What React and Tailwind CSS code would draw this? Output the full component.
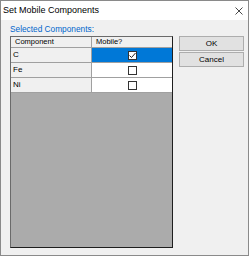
import React from "react";

function Check({ checked }) {
  return (
    <div className="w-[9px] h-[9px] bg-white border border-[#333] flex items-center justify-center">
      {checked && (
        <svg width="7" height="7" viewBox="0 0 7 7">
          <polyline points="0.5,3.5 2.5,5.5 6.5,1" fill="none" stroke="#222" strokeWidth="1" />
        </svg>
      )}
    </div>
  );
}

function Row({ name, checked, selected }) {
  return (
    <div className="flex h-[15px] border-b border-[#a0a0a0]">
      <div className="w-[81px] bg-[#f0f0f0] border-r border-[#a0a0a0] pl-[2px] flex items-center text-[8px] text-black">
        {name}
      </div>
      <div className={"flex-1 flex items-center justify-center " + (selected ? "bg-[#0078d7]" : "bg-white")}>
        <Check checked={checked} />
      </div>
    </div>
  );
}

export default function App() {
  return (
    <div
      className="w-[249px] h-[256px] border border-[#8a8a8a] bg-[#f0f0f0] flex flex-col"
      style={{ fontFamily: '"Liberation Sans", Arial, sans-serif' }}
    >
      <div className="h-[19px] bg-white flex items-center justify-between pl-[2px] pr-[5px]">
        <span className="text-[9px] text-black leading-none">Set Mobile Components</span>
        <svg width="8" height="8" viewBox="0 0 8 8">
          <path d="M0.5 0.5 L7.5 7.5 M7.5 0.5 L0.5 7.5" stroke="#333" strokeWidth="0.9" />
        </svg>
      </div>
      <div className="flex-1 flex pl-[9px] pr-[4px] pt-[3px] pb-[7px]">
        <div className="w-[163px] flex flex-col">
          <div className="h-[13px] text-[8.3px] text-[#0066cc] leading-[13px]">Selected Components:</div>
          <div className="flex-1 flex flex-col bg-[#ababab] border border-t-[#6a6a6a] border-l-[#6a6a6a] border-r-[#1e1e1e] border-b-[#1e1e1e]">
            <div className="flex h-[11px] bg-[#f0f0f0] border-b border-[#a0a0a0] text-[7.5px] text-black">
              <div className="w-[81px] border-r border-[#a0a0a0] pl-[4px] flex items-center">Component</div>
              <div className="flex-1 pl-[4px] flex items-center">Mobile?</div>
            </div>
            <Row name="C" checked selected />
            <Row name="Fe" />
            <Row name="Ni" />
          </div>
        </div>
        <div className="flex-1 flex flex-col gap-[1px] pl-[6px] pt-[13px]">
          <button className="h-[15px] w-full bg-[#e1e1e1] border border-[#adadad] text-[8px] text-black flex items-center justify-center">
            OK
          </button>
          <button className="h-[15px] w-full bg-[#e1e1e1] border border-[#adadad] text-[8px] text-black flex items-center justify-center">
            Cancel
          </button>
        </div>
      </div>
    </div>
  );
}
